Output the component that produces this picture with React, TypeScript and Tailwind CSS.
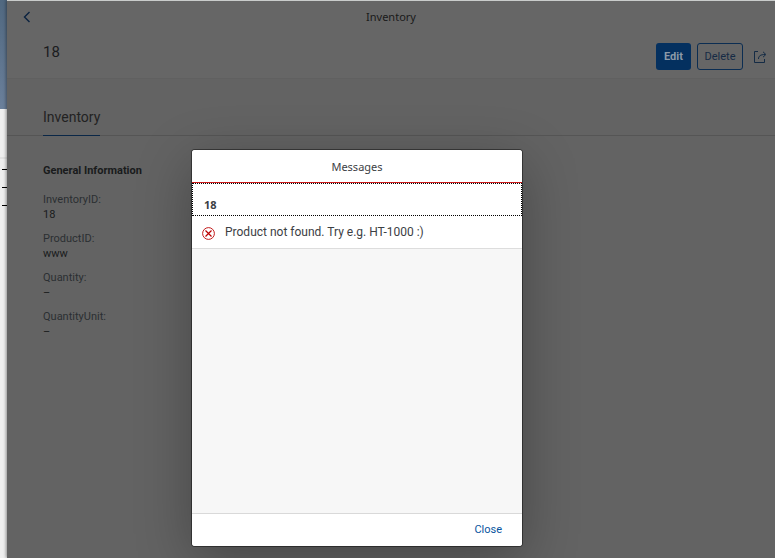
import React from "react";

const fields = [
  { label: "InventoryID:", value: "18" },
  { label: "ProductID:", value: "www" },
  { label: "Quantity:", value: "–" },
  { label: "QuantityUnit:", value: "–" },
];

function BackIcon() {
  return (
    <svg width="8" height="12" viewBox="0 0 8 12" fill="none" stroke="#0b2340" strokeWidth="1.4">
      <path d="M6.5 1 1.5 6l5 5" />
    </svg>
  );
}

function ShareIcon() {
  return (
    <svg width="14" height="12" viewBox="0 0 14 12" fill="none" stroke="#142b45" strokeWidth="1">
      <path d="M5 .5H1.500v11h10V8" />
      <path d="M5.500 8C5.500 5 7.500 3.500 12 3.500" />
      <path d="M10 .8 12.900 3.500 10 6.200" />
    </svg>
  );
}

function ErrorIcon() {
  return (
    <svg width="13" height="13" viewBox="0 0 13 13" fill="none" stroke="#bb0000" className="shrink-0">
      <circle cx="6.500" cy="6.500" r="5.900" strokeWidth="0.9" />
      <path d="M3.500 3.500l6 6M9.500 3.500l-6 6" strokeWidth="1.200" />
    </svg>
  );
}

function ListEdge() {
  return (
    <div className="flex w-[7px] shrink-0 flex-col bg-[#efefef]">
      <div className="h-[109px] bg-linear-to-b from-[#506880] to-[#6b809b]" />
      <div className="h-[50px] border-b-2 border-[#e2e2e2]" />
      <div className="flex flex-col items-end gap-[17px] pt-[10px]">
        <div className="h-px w-[5px] bg-black" />
        <div className="h-px w-[5px] bg-black" />
        <div className="h-px w-[5px] bg-black" />
      </div>
    </div>
  );
}

function ObjectPage() {
  return (
    <main className="flex min-w-0 grow flex-col border-t border-[#c9cccb] bg-[#636363] shadow-[-1px_0_3px_rgba(0,0,0,0.4)]">
      <header className="border-b border-[#606060] bg-[#666666]">
        <div className="grid h-8 grid-cols-[1fr_auto_1fr] items-center px-4">
          <button type="button" aria-label="Back" className="w-fit">
            <BackIcon />
          </button>
          <h1 className="font-['Noto_Sans',sans-serif] text-[11px] text-[#1a1a1a]">Inventory</h1>
        </div>
        <div className="flex h-[45px] items-start justify-between pr-2 pl-9">
          <h2 className="pt-[9px] text-[15px] leading-5 text-[#1b1c1e]">18</h2>
          <div className="flex items-center gap-[6px] pt-[10px]">
            <button type="button" className="h-[27px] w-[35px] rounded-[3px] bg-[#04305f] pt-px text-[11px] font-bold text-[#8c9aa8]">
              Edit
            </button>
            <button type="button" className="h-[27px] w-[46px] rounded-[3px] border border-[#0b2d52] pt-px text-[11px] text-[#162b45]">
              Delete
            </button>
            <button type="button" aria-label="Share" className="ml-1 flex h-[27px] items-center">
              <ShareIcon />
            </button>
          </div>
        </div>
      </header>
      <nav className="flex h-[57px] items-end border-b border-[#555555] pl-9">
        <a href="#inventory" className="-mb-px h-[31px] border-b border-[#0a2747] text-sm leading-6 text-[#222222]">
          Inventory
        </a>
      </nav>
      <section className="px-9 pt-[27px] text-[11px]">
        <h3 className="leading-4 font-bold text-[#191b1c]">General Information</h3>
        <dl className="pt-[13px]">
          {fields.map((f) => (
            <div key={f.label} className="h-[39px] leading-[15px]">
              <dt className="text-[#2b2f32]">{f.label}</dt>
              <dd className="text-[#191b1c]">{f.value}</dd>
            </div>
          ))}
        </dl>
      </section>
    </main>
  );
}

function MessagesDialog() {
  return (
    <div
      role="dialog"
      aria-labelledby="messages-title"
      className="absolute top-[150px] left-[192px] flex h-[396px] w-[330px] flex-col overflow-hidden rounded-[3px] bg-[#f7f7f7] font-['Noto_Sans',sans-serif] text-[#3c4044] shadow-[0_0_0_1px_rgba(0,0,0,0.42),0_14px_56px_rgba(0,0,0,0.3)]"
    >
      <header className="flex h-[33px] shrink-0 items-center justify-center border-b border-[#cc1c1c] bg-white pt-[2px]">
        <h2 id="messages-title" className="text-[11px]">Messages</h2>
      </header>
      <div className="flex h-[33px] shrink-0 items-end border border-dotted border-black bg-white px-[11px] pb-[2px] text-[11px] leading-4 font-bold">
        18
      </div>
      <div className="flex h-[33px] shrink-0 items-center gap-[10px] border-b border-[#dddddd] bg-white px-[10px]">
        <div className="pt-[3px]">
          <ErrorIcon />
        </div>
        <p className="font-[Roboto,sans-serif] text-xs">Product not found. Try e.g. HT-1000 :)</p>
      </div>
      <div className="grow" />
      <footer className="flex h-[33px] shrink-0 items-center justify-end border-t border-[#d9d9d9] bg-white pr-5">
        <button type="button" className="font-[Roboto,sans-serif] text-[11px] text-[#0854a0]">Close</button>
      </footer>
    </div>
  );
}

export default function App() {
  return (
    <div className="relative flex min-h-screen w-full overflow-hidden font-[Roboto,sans-serif]">
      <ListEdge />
      <ObjectPage />
      <MessagesDialog />
    </div>
  );
}
